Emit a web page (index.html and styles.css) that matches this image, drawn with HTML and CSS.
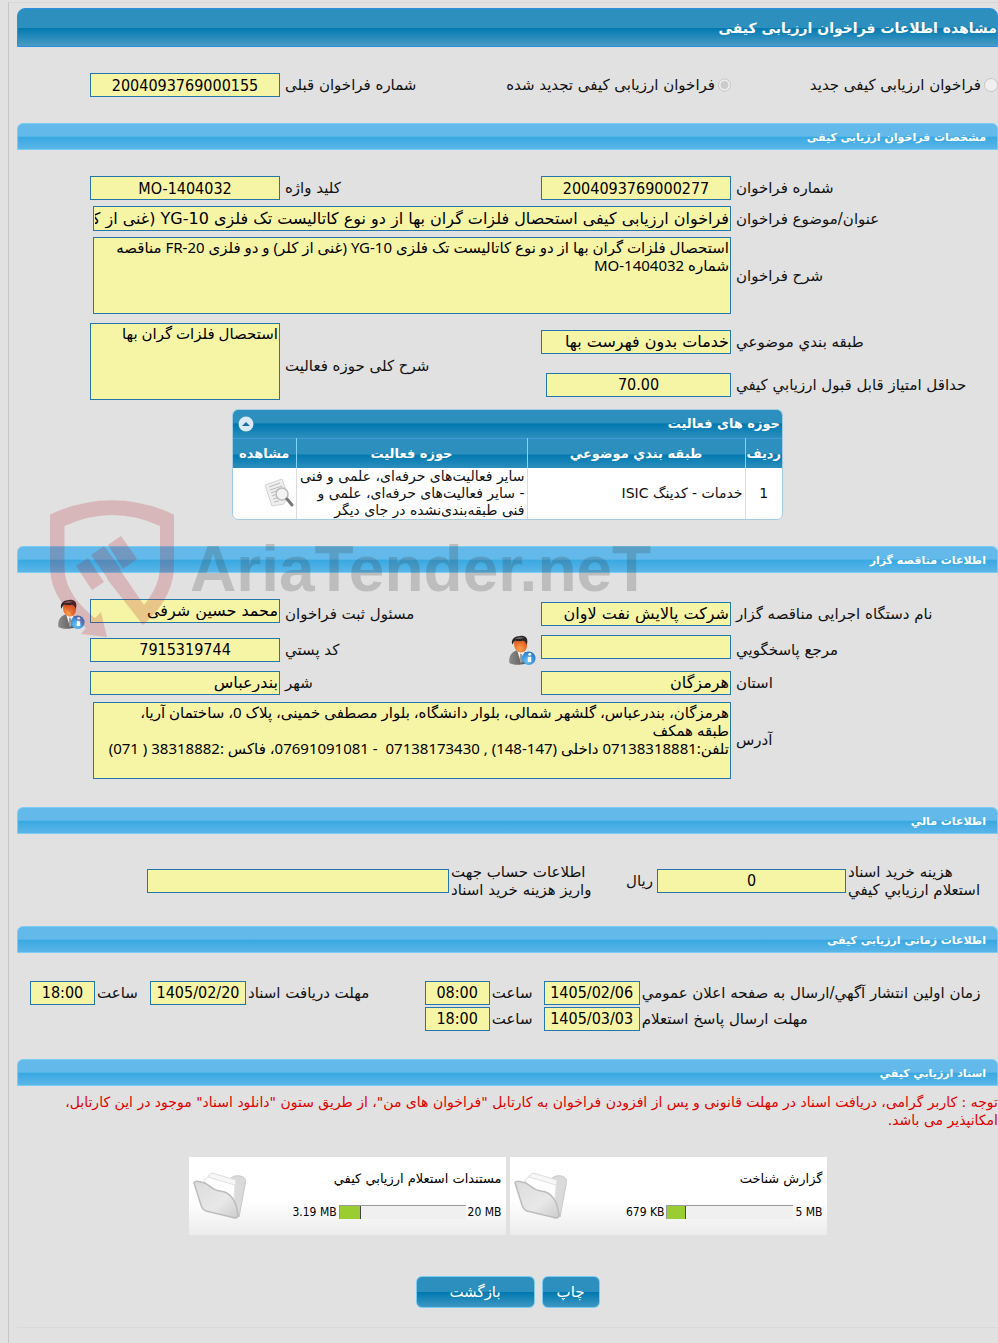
FILE: index.html
```
<!DOCTYPE html>
<html lang="fa" dir="rtl">
<head>
    <meta charset="UTF-8">
    <meta name="viewport" content="width=device-width, initial-scale=1.0">
    <title>مشاهده اطلاعات فراخوان ارزیابی کیفی</title>
    <link rel="stylesheet" href="styles.css">
</head>
<body>
    <!-- Shared icons -->
    <svg class="sprite" width="0" height="0" aria-hidden="true">
        <defs>
            <linearGradient id="suit" x1="0" y1="0" x2="1" y2="0">
                <stop offset="0" stop-color="#8a8a8a"/>
                <stop offset="1" stop-color="#4c4c4c"/>
            </linearGradient>
            <radialGradient id="face" cx=".45" cy=".75" r=".7">
                <stop offset="0" stop-color="#ffa04c"/>
                <stop offset="1" stop-color="#d9571c"/>
            </radialGradient>
            <radialGradient id="info" cx=".4" cy=".7" r=".7">
                <stop offset="0" stop-color="#6cc4f8"/>
                <stop offset="1" stop-color="#2478cc"/>
            </radialGradient>
            <linearGradient id="folder" x1="0" y1="0" x2="1" y2="1">
                <stop offset="0" stop-color="#dcdcdc"/>
                <stop offset=".6" stop-color="#e8e8e8"/>
                <stop offset="1" stop-color="#cccccc"/>
            </linearGradient>
        </defs>
        <symbol id="icon-user" viewBox="0 0 28 31">
            <path d="M1 29C0 22 3 18 8 16l8 1c4 1 6 5 6 11-4 3-17 4-21 1z" fill="url(#suit)"/>
            <path d="M9 16l4 13 4-12z" fill="#f2f2f2"/>
            <path d="M12 19l2 1 1 7-2 2-1-2z" fill="#999"/>
            <path d="M6 7c-1 6 2 11 7 11s7-5 6-11c-3-4-10-4-13 0z" fill="url(#face)"/>
            <path d="M4 10C2 4 7 1 12 1c6-1 9 3 7 9-1-2-2-4-4-4-3 1-6 0-8 0-2 1-2 3-3 4z" fill="#2b2625"/>
            <path d="M7 4c2-2 7-2 9-1-3 1-6 1-9 1z" fill="#777"/>
            <circle cx="21" cy="24" r="7" fill="url(#info)"/>
            <circle cx="22" cy="20" r="1.500" fill="#fff"/>
            <path d="M20 22.500h3.500V28H20z" fill="#fff"/>
        </symbol>
        <symbol id="icon-folder" viewBox="0 0 54 48">
            <path d="M36 8c4-5 10-5 14-3 3 2 3 4 2 8l-6 32-5-17-1-15z" fill="#dadada" stroke="#c8c8c8"/>
            <path d="M15 4l4-3 24 7-2 30-22-2z" fill="#f7f7f7" stroke="#ddd"/>
            <path d="M11 8l4-3 27 8-2 26-20-4z" fill="#fff" stroke="#e0e0e0"/>
            <path d="M1 11c0-2 3-2 7-1 8 1 10 8 19 9 11 1 17 11 18 25-1 3-4 2-7 1L13 39c-3-1-4-3-5-6z" fill="url(#folder)" stroke="#bcbcbc" stroke-width="1.500"/>
        </symbol>
    </svg>

    <div class="page">
        <h1 class="title-bar">مشاهده اطلاعات فراخوان ارزیابی کیفی</h1>

        <div class="call-type">
            <div class="radio-item">
                <input type="radio" id="type-new" name="call_type" disabled>
                <label for="type-new" class="label">فراخوان ارزیابی کیفی جدید</label>
            </div>
            <div class="radio-item renewed">
                <input type="radio" id="type-renewed" name="call_type" checked disabled>
                <label for="type-renewed" class="label">فراخوان ارزیابی کیفی تجدید شده</label>
            </div>
            <label for="prev-no" class="label">شماره فراخوان قبلی</label>
            <input type="text" id="prev-no" class="field number" value="2004093769000155" readonly>
        </div>

        <!-- Call details -->
        <h2 class="section-bar">مشخصات فراخوان ارزیابی کیفی</h2>
        <div class="form-grid">
            <label for="call-no" class="label">شماره فراخوان</label>
            <input type="text" id="call-no" class="field number" value="2004093769000277" readonly>
            <label for="keyword" class="label">کلید واژه</label>
            <input type="text" id="keyword" class="field number" value="MO-1404032" readonly>

            <label for="subject" class="label first">عنوان/موضوع فراخوان</label>
            <input type="text" id="subject" class="field subject wide" value="فراخوان ارزیابی کیفی استحصال فلزات گران بها از دو نوع کاتالیست تک فلزی YG-10 (غنی از کلر) و دو فلزی FR-20" readonly>

            <label for="description" class="label first">شرح فراخوان</label>
            <textarea id="description" class="field area wide" readonly>استحصال فلزات گران بها از دو نوع کاتالیست تک فلزی YG-10 (غنی از کلر) و دو فلزی FR-20 مناقصه شماره MO-1404032</textarea>
        </div>
        <div class="form-grid category-grid">
            <label for="category" class="label">طبقه بندي موضوعي</label>
            <input type="text" id="category" class="field" value="خدمات بدون فهرست بها" readonly>
            <label for="activity" class="label tall">شرح کلی حوزه فعالیت</label>
            <textarea id="activity" class="field area tall-area" readonly>استحصال فلزات گران بها</textarea>
            <label for="min-score" class="label first">حداقل امتیاز قابل قبول ارزیابي کیفي</label>
            <input type="text" id="min-score" class="field number score" value="70.00" readonly>
        </div>

        <div class="activity-box">
            <div class="activity-title">
                <h3>حوزه های فعالیت</h3>
                <button type="button" class="collapse-btn" aria-label="بستن">
                    <svg viewBox="0 0 18 18" width="18" height="18">
                        <circle cx="9" cy="9" r="7.500" fill="#dbe9f7"/>
                        <path d="M5 11l4-4 4 4z" fill="#1d6f9f"/>
                    </svg>
                </button>
            </div>
            <table class="activity-table">
                <thead>
                    <tr>
                        <th class="col-row">ردیف</th>
                        <th class="col-class">طبقه بندي موضوعي</th>
                        <th class="col-field">حوزه فعالیت</th>
                        <th class="col-view">مشاهده</th>
                    </tr>
                </thead>
                <tbody>
                    <tr>
                        <td class="center">1</td>
                        <td>خدمات - کدینگ ISIC</td>
                        <td>سایر فعالیت‌های حرفه‌ای، علمی و فنی - سایر فعالیت‌های حرفه‌ای، علمی و فنی طبقه‌بندی‌نشده در جای دیگر</td>
                        <td class="view-cell">
                            <button type="button" class="icon-btn" aria-label="مشاهده">
                                <svg viewBox="0 0 30 30" width="30" height="30">
                                    <path d="M1 7l17-6 6 17-4 8-12 2z" fill="#eee" stroke="#d4d4d4"/>
                                    <path d="M5 9l11-4M6 12l12-4M7 15l8-3M8 18l5-2M9 21l4-1M10 24l5-1" stroke="#bbb"/>
                                    <circle cx="18" cy="16" r="6" fill="#f4f4f4" fill-opacity=".8" stroke="#bbb" stroke-width="1.500"/>
                                    <path d="M23 21l5 6" stroke="#777" stroke-width="3" stroke-linecap="round"/>
                                </svg>
                            </button>
                        </td>
                    </tr>
                </tbody>
            </table>
        </div>

        <!-- Tender holder -->
        <h2 class="section-bar">اطلاعات مناقصه گزار</h2>
        <div class="form-grid holder-grid">
            <label for="org" class="label">نام دستگاه اجرایی مناقصه گزار</label>
            <input type="text" id="org" class="field" value="شرکت پالایش نفت لاوان" readonly>
            <label for="registrar" class="label">مسئول ثبت فراخوان</label>
            <input type="text" id="registrar" class="field top" value="محمد حسین شرفی" readonly>
            <button type="button" class="icon-btn" aria-label="مشخصات مسئول ثبت">
                <svg width="28" height="30"><use href="#icon-user"/></svg>
            </button>

            <label for="contact" class="label first">مرجع پاسخگویي</label>
            <input type="text" id="contact" class="field top" value="" readonly>
            <div class="icon-label">
                <button type="button" class="icon-btn" aria-label="مشخصات مرجع پاسخگویي">
                    <svg width="28" height="30"><use href="#icon-user"/></svg>
                </button>
                <label for="postcode" class="label">کد پستي</label>
            </div>
            <input type="text" id="postcode" class="field number" value="7915319744" readonly>

            <label for="province" class="label first">استان</label>
            <input type="text" id="province" class="field" value="هرمزگان" readonly>
            <label for="city" class="label">شهر</label>
            <input type="text" id="city" class="field" value="بندرعباس" readonly>

            <label for="address" class="label first">آدرس</label>
            <textarea id="address" class="field area wide" readonly>هرمزگان، بندرعباس، گلشهر شمالی، بلوار دانشگاه، بلوار مصطفی خمینی، پلاک 0، ساختمان آریا،
طبقه همکف
تلفن:07138318881 داخلی (147-148) , 07138173430  - 07691091081، فاکس :38318882 ( 071)</textarea>
        </div>

        <!-- Finance -->
        <h2 class="section-bar">اطلاعات مالي</h2>
        <div class="finance-grid">
            <label for="fee" class="label two-line">هزینه خرید اسناد<br>استعلام ارزیابي کیفي</label>
            <input type="text" id="fee" class="field number" value="0" readonly>
            <div class="icon-label">
                <span>ریال</span>
                <label for="account" class="label two-line">اطلاعات حساب جهت<br>واریز هزینه خرید اسناد</label>
            </div>
            <input type="text" id="account" class="field" value="" readonly>
        </div>

        <!-- Schedule -->
        <h2 class="section-bar">اطلاعات زمانی ارزیابی کیفی</h2>
        <div class="time-grid">
            <label for="publish-date" class="label">زمان اولین انتشار آگهي/ارسال به صفحه اعلان عمومي</label>
            <input type="text" id="publish-date" class="field number" value="1405/02/06" readonly>
            <label for="publish-time" class="label">ساعت</label>
            <input type="text" id="publish-time" class="field number" value="08:00" readonly>
            <label for="receive-date" class="label">مهلت دریافت اسناد</label>
            <input type="text" id="receive-date" class="field number" value="1405/02/20" readonly>
            <label for="receive-time" class="label">ساعت</label>
            <input type="text" id="receive-time" class="field number" value="18:00" readonly>

            <label for="reply-date" class="label first">مهلت ارسال پاسخ استعلام</label>
            <input type="text" id="reply-date" class="field number" value="1405/03/03" readonly>
            <label for="reply-time" class="label">ساعت</label>
            <input type="text" id="reply-time" class="field number" value="18:00" readonly>
        </div>

        <!-- Documents -->
        <h2 class="section-bar">اسناد ارزیابي کیفي</h2>
        <p class="notice">توجه : کاربر گرامی، دریافت اسناد در مهلت قانونی و پس از افزودن فراخوان به کارتابل "فراخوان های من"، از طریق ستون "دانلود اسناد" موجود در این کارتابل، امکانپذیر می باشد.</p>

        <div class="files">
            <a href="#" class="file-card">
                <div class="file-info">
                    <span class="file-name">گزارش شناخت</span>
                    <div class="file-size">
                        <span dir="ltr">5 MB</span>
                        <div class="meter"><div class="meter-fill" style="width: 15%"></div></div>
                        <span dir="ltr">679 KB</span>
                    </div>
                </div>
                <svg class="folder" width="54" height="48"><use href="#icon-folder"/></svg>
            </a>
            <a href="#" class="file-card">
                <div class="file-info">
                    <span class="file-name">مستندات استعلام ارزیابي کیفي</span>
                    <div class="file-size">
                        <span dir="ltr">20 MB</span>
                        <div class="meter"><div class="meter-fill" style="width: 17%"></div></div>
                        <span dir="ltr">3.19 MB</span>
                    </div>
                </div>
                <svg class="folder" width="54" height="48"><use href="#icon-folder"/></svg>
            </a>
        </div>

        <div class="actions">
            <button type="button" class="btn">چاپ</button>
            <button type="button" class="btn btn-back">بازگشت</button>
        </div>
    </div>

    <!-- Watermark -->
    <div class="watermark" dir="ltr">
        <svg viewBox="0 0 126 138" width="126" height="138" fill="#b4141e">
            <path d="M0 14.500Q62-14 124 14.500V65C124 92 108 112 93 125L57 79 70 70 94 105C104 93 110 80 110 65V26Q62 4 14.500 26V68C15 90 30 106 45 118L51 112 57 137 31 134 36 128C15 110 0 92 0 66z"/>
            <path d="M26 66l12-8 16 24-12 8zM41 55l13-9 17 23-13 10zM58 45l13-9 16 23-14 10z"/>
        </svg>
        <span class="watermark-text">AriaTender.neT</span>
    </div>
</body>
</html>
```

FILE: styles.css
```
* {
    box-sizing: border-box;
}

body {
    margin: 0;
    padding: 2px 0 0 8px;
    background-color: #e1e1e1;
    color: #111;
    font-family: Tahoma, "DejaVu Sans", sans-serif;
    font-size: 15px;
    line-height: 18px;
    position: relative;
    overflow-x: hidden;
}

h1, h2, h3, p {
    margin: 0;
}

input, textarea, button {
    font-family: inherit;
    margin: 0;
}

.sprite {
    position: absolute;
}

.page {
    border-left: 1px solid #c6c6c6;
    border-top: 1px solid #d8d8d8;
    padding: 5px 0 15px 8px;
}

/* Bars */
.title-bar {
    height: 39px;
    line-height: 38px;
    border: 1px solid #2a8fe0;
    border-radius: 8px 8px 0 0;
    background: linear-gradient(#2d8fbd 50%, #0078b0 51%, #4a9cc5);
    color: #fff;
    font-size: 14px;
}

.section-bar {
    height: 27px;
    line-height: 27px;
    padding-right: 11px;
    border: 1px solid #7accf4;
    border-radius: 6px 6px 0 0;
    background: linear-gradient(#63baea 48%, #3aa9e2 54%, #5bb5e7);
    color: #fff;
    font-size: 11px;
}

/* Fields */
.field {
    width: 100%;
    height: 24px;
    padding: 0 1px;
    border: 1px solid #2477ab;
    border-radius: 0;
    background-color: #f6f4a5;
    color: #000;
    font-size: 16px;
    outline: none;
}

.number {
    font-family: Tahoma, "DejaVu Sans Condensed", sans-serif;
    text-align: center;
    direction: ltr;
}

.subject {
    height: 25px;
}

.area {
    height: 77px;
    font-family: Tahoma, "Noto Sans", "DejaVu Sans", sans-serif;
    font-size: 15px;
    line-height: 18px;
    resize: none;
    overflow: hidden;
    display: block;
}

.label {
    text-align: left;
}

.first {
    grid-column: 1;
}

.call-type, .form-grid {
    display: grid;
    grid-template-columns: 262fr 190px 251fr 190px 68px;
    column-gap: 5px;
    row-gap: 6px;
    align-items: center;
}

.call-type {
    padding: 26px 0;
}

.radio-item {
    display: flex;
    align-items: center;
    gap: 3px;
    white-space: nowrap;
}

.radio-item input {
    width: 14px;
    height: 14px;
}

.form-grid {
    padding-top: 26px;
}

.wide {
    grid-column: 2 / 5;
    width: auto;
    margin-left: 3px;
}

.category-grid {
    grid-template-rows: 37px 49px;
    row-gap: 0;
    padding-top: 9px;
}

.tall {
    grid-area: 1 / 3 / 3 / 4;
}

.tall-area {
    grid-area: 1 / 4 / 3 / 5;
    align-self: start;
}

.score {
    width: 185px;
}

.holder-grid {
    margin-bottom: 28px;
}

.holder-grid .wide {
    margin-top: 1px;
}

.top {
    align-self: start;
}

.icon-label {
    display: flex;
    justify-content: space-between;
    align-items: center;
}

.icon-btn {
    display: block;
    padding: 0;
    border: none;
    background: none;
    line-height: 0;
    cursor: pointer;
    justify-self: start;
}

/* Activity table */
.activity-box {
    width: 551px;
    margin: 0 auto 26px;
    border: 1px solid #a5cbe2;
    border-radius: 6px;
    overflow: hidden;
    background-color: #fff;
}

.activity-title {
    display: flex;
    justify-content: space-between;
    align-items: center;
    height: 28px;
    padding: 0 2px 0 4px;
    background: linear-gradient(#2d8fbd 45%, #0078b0 50%, #2d8fbd);
    color: #fff;
}

.activity-title h3 {
    font-size: 13px;
}

.collapse-btn {
    padding: 0;
    border: none;
    background: none;
    line-height: 0;
    cursor: pointer;
}

.activity-table {
    width: 100%;
    border-collapse: collapse;
    table-layout: fixed;
    font-size: 14px;
    line-height: 17px;
}

.activity-table th {
    height: 29px;
    padding: 0;
    border-top: 1px solid #3f9ad8;
    border-left: 1px solid #7fd4fa;
    background: linear-gradient(#2d8fbd 50%, #0078b0 51%, #2d8fbd);
    color: #fff;
    font-size: 13px;
}

.activity-table td {
    height: 51px;
    padding: 0 2px;
    border-left: 1px solid #ddd;
}

.activity-table th:last-child, .activity-table td:last-child {
    border-left: none;
}

.activity-table .center {
    text-align: center;
}

.col-row {
    width: 37px;
}

.col-field {
    width: 231px;
}

.col-view {
    width: 63px;
}

/* Finance */
.finance-grid {
    display: grid;
    grid-template-columns: 150fr 189px 204fr 302px 128fr;
    column-gap: 2px;
    align-items: center;
    padding: 29px 0 27px;
}

.finance-grid .icon-label {
    padding-right: 2px;
}

.two-line {
    white-space: nowrap;
}

/* Schedule */
.time-grid {
    display: grid;
    grid-template-columns: 357fr 96px 50px 65px 175fr 96px 51px 65px 11px;
    gap: 2px;
    align-items: center;
    padding: 28px 0 28px;
    white-space: nowrap;
}

/* Documents */
.notice {
    padding: 7px 0 0 20px;
    color: #e00000;
    font-size: 14px;
}

.files {
    display: flex;
    justify-content: center;
    gap: 4px;
    padding: 28px 0 41px;
}

.file-card {
    display: flex;
    align-items: center;
    width: 317px;
    height: 78px;
    padding: 0 4px;
    background: linear-gradient(#fff 55%, #ececec);
    color: #000;
    text-decoration: none;
}

.file-info {
    flex: 1;
}

.file-name {
    display: block;
    margin-bottom: 15px;
    font-size: 13px;
}

.file-size {
    display: flex;
    align-items: center;
    gap: 2px;
    font-family: Tahoma, "DejaVu Sans Condensed", sans-serif;
    font-size: 12px;
}

.meter {
    direction: ltr;
    width: 127px;
    height: 14px;
    border-top: 1px solid #999;
    border-left: 1px solid #999;
    background-color: #f0f0f0;
}

.meter-fill {
    height: 100%;
    border-right: 1px solid #444;
    background-color: #9acd32;
}

.folder {
    margin-right: auto;
}

.actions {
    display: flex;
    justify-content: center;
    gap: 7px;
    padding-bottom: 19px;
    border-bottom: 1px solid #dadada;
}

.btn {
    min-width: 58px;
    height: 32px;
    padding: 0 14px;
    border: 1px solid #7accf4;
    border-radius: 6px;
    background: linear-gradient(#2d8fbd 50%, #0078b0 51%, #3f97c2);
    color: #fff;
    font-size: 15px;
    cursor: pointer;
}

.btn-back {
    min-width: 119px;
}

/* Watermark */
.watermark {
    position: absolute;
    left: 50px;
    top: 500px;
    display: flex;
    align-items: center;
    gap: 14px;
    opacity: 0.2;
    pointer-events: none;
}

.watermark-text {
    color: #333;
    font-family: "Liberation Sans", Arial, sans-serif;
    font-size: 64px;
    font-weight: bold;
    line-height: 60px;
}
```
